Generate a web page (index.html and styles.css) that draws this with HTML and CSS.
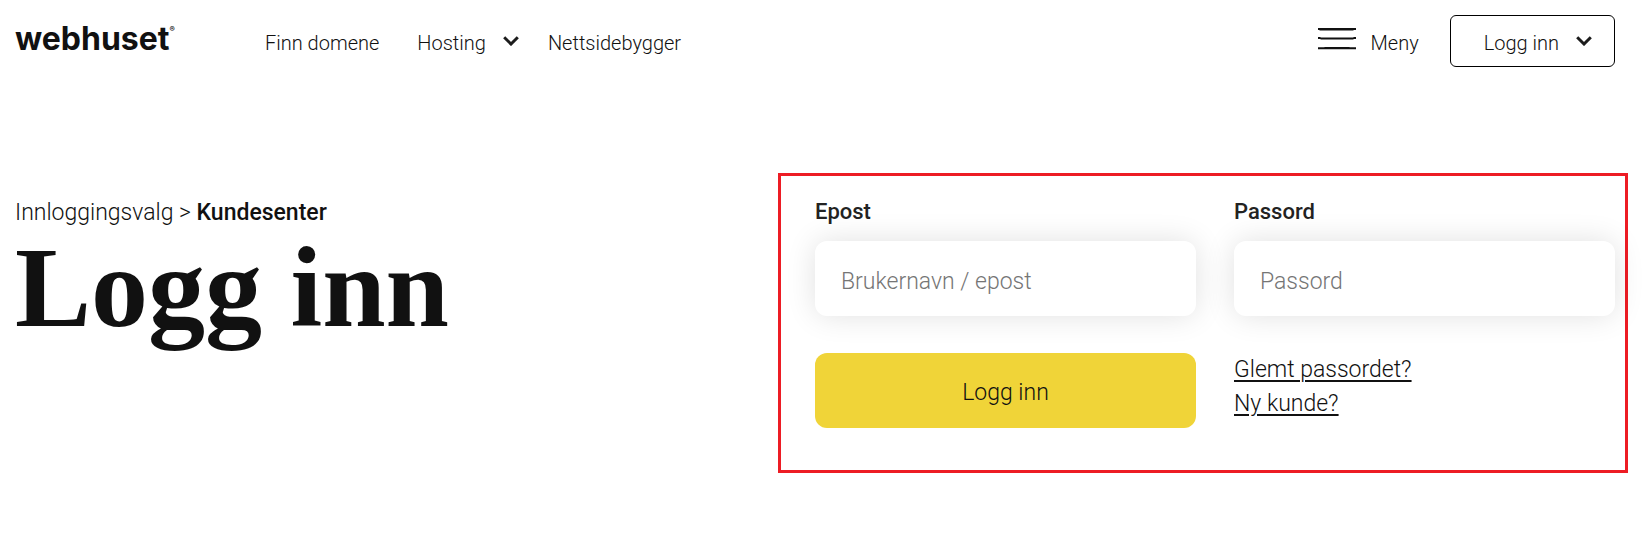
FILE: index.html
```
<!DOCTYPE html>
<html lang="no">
<head>
  <meta charset="UTF-8">
  <meta name="viewport" content="width=device-width, initial-scale=1.0">
  <title>Logg inn - webhuset</title>
  <link rel="stylesheet" href="styles.css">
</head>
<body>

  <header class="header">
    <a href="#" class="logo">webhuset<span class="logo-mark">®</span></a>

    <nav class="nav">
      <a href="#">Finn domene</a>
      <a href="#" class="has-menu">Hosting
        <svg class="chevron" viewBox="0 0 16 10" aria-hidden="true"><path d="M1.2 1.3 8 8 14.8 1.3"/></svg>
      </a>
      <a href="#">Nettsidebygger</a>
    </nav>

    <div class="actions">
      <button type="button" class="menu-btn">
        <svg class="burger" viewBox="0 0 38 22" aria-hidden="true">
          <path d="M0 0h38v2H36L35 2.4H2L1 2H0zM0 9h2l1 .6h32l1-.6h2v2h-2l-1 .4H3L2 11H0zM0 19.2h6l1-.2h24l1 .2h6v2H0z"/>
        </svg>
        Meny
      </button>
      <button type="button" class="login-btn">
        Logg inn
        <svg class="chevron" viewBox="0 0 16 10" aria-hidden="true"><path d="M1.2 1.3 8 8 14.8 1.3"/></svg>
      </button>
    </div>
  </header>

  <main class="main">
    <section class="intro">
      <p class="breadcrumb"><a href="#">Innloggingsvalg</a> &gt; <strong>Kundesenter</strong></p>
      <h1>Logg inn</h1>
    </section>

    <form class="login-form">
      <div class="field">
        <label for="email">Epost</label>
        <input type="text" id="email" placeholder="Brukernavn / epost">
      </div>
      <div class="field">
        <label for="password">Passord</label>
        <input type="password" id="password" placeholder="Passord">
      </div>
      <button type="submit" class="submit-btn">Logg inn</button>
      <div class="links">
        <a href="#">Glemt passordet?</a>
        <a href="#">Ny kunde?</a>
      </div>
    </form>
  </main>

</body>
</html>
```
FILE: styles.css
```
* {
  box-sizing: border-box;
}

body {
  margin: 0;
  background-color: #fff;
  color: #111;
  font-family: Roboto, "Liberation Sans", sans-serif;
  font-size: 23px;
  font-weight: 300;
}

a {
  color: inherit;
  text-decoration: none;
}

button {
  font: inherit;
  color: inherit;
  cursor: pointer;
}

.header {
  display: flex;
  align-items: center;
  padding: 15px 27px 0 15px;
  font-size: 20px;
}

.logo {
  display: flex;
  width: 250px;
  padding-bottom: 4px;
  font-family: Inter, "Liberation Sans", sans-serif;
  font-size: 32px;
  line-height: 40px;
  font-weight: 700;
}

.logo-mark {
  font-size: 8px;
  line-height: 20px;
}

.nav {
  display: flex;
  gap: 38px;
  padding-top: 3px;
}

.has-menu {
  display: flex;
  align-items: center;
  gap: 17px;
  margin-right: -9px;
}

.chevron {
  width: 16px;
  height: 10px;
  margin-bottom: 3px;
  fill: none;
  stroke: #1c1c1c;
  stroke-width: 3;
}

.actions {
  display: flex;
  align-items: center;
  gap: 31px;
  margin-left: auto;
}

.menu-btn {
  display: flex;
  align-items: center;
  gap: 15px;
  padding: 3px 0 0;
  border: none;
  background: none;
}

.burger {
  width: 38px;
  height: 22px;
  margin-bottom: 8px;
  fill: #111;
}

.login-btn {
  display: flex;
  align-items: center;
  gap: 17px;
  height: 52px;
  padding: 3px 22px 0 33px;
  border: 1px solid #000;
  border-radius: 6px;
  background: #fff;
}

.main {
  display: grid;
  grid-template-columns: 763fr 850fr;
  padding: 106px 14px 0 15px;
}

.intro {
  padding-top: 23px;
}

.breadcrumb {
  margin: 0;
  line-height: 34px;
}

.breadcrumb strong {
  font-weight: 500;
}

h1 {
  margin: 0;
  font-family: "Liberation Serif", serif;
  font-size: 114px;
  line-height: 116px;
  font-weight: 700;
}

.login-form {
  display: grid;
  grid-template-columns: 1fr 1fr;
  gap: 37px 38px;
  padding: 19px 10px 42px 34px;
  border: 3px solid #ed1c24;
}

.field label {
  display: block;
  margin-bottom: 12px;
  font-size: 22px;
  line-height: 34px;
  font-weight: 500;
  color: #222;
}

.field input {
  display: block;
  width: 100%;
  height: 75px;
  padding: 6px 26px 0;
  border: none;
  border-radius: 12px;
  background: #fff;
  box-shadow: 0 0 30px rgba(0, 0, 0, 0.12);
  font: inherit;
}

.field input::placeholder {
  color: #757575;
}

.submit-btn {
  height: 75px;
  padding: 4px 0 0;
  border: none;
  border-radius: 12px;
  background-color: #f0d438;
}

.links {
  display: flex;
  flex-direction: column;
  align-items: flex-start;
  line-height: 34px;
}

.links a {
  text-decoration: underline;
  text-decoration-thickness: 2px;
  text-underline-offset: 3px;
}
```
